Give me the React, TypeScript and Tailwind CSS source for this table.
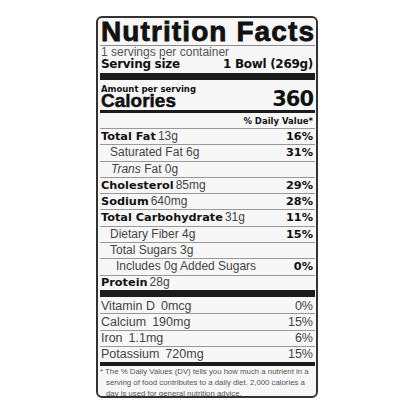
import React from 'react';

const B = "font-['DejaVu_Sans',sans-serif] font-bold text-[#111] leading-none";
const R = "font-['Liberation_Sans',Arial,sans-serif] text-[#444] leading-none";

function Row({ cls, children, pct }: { cls: string; children: React.ReactNode; pct?: React.ReactNode }) {
  return (
    <div className={`flex items-baseline pl-[1px] pr-[2px] ${cls}`}>
      {children}
      {pct}
    </div>
  );
}

const pctB = (v: string) => <span className={`ml-auto ${B} text-[11.3px]`}>{v}</span>;
const pctR = (v: string) => <span className={`ml-auto ${R} text-[12.5px]`}>{v}</span>;

export default function App() {
  return (
    <div className="w-[416px] h-[416px] bg-white pt-[16px] pl-[96px]">
      <div className="w-[222px] h-[382px] border-2 border-[#333] rounded-[6px] bg-[#f7f7f7] pl-[2px] pr-[1px] flex flex-col overflow-hidden">
        {/* header */}
        <div className="h-[27px] shrink-0 pl-[1px] font-['Liberation_Sans',Arial,sans-serif] font-bold text-[28px] leading-none tracking-[1.1px] text-[#111] [-webkit-text-stroke:0.8px_#111] whitespace-nowrap">
          Nutrition Facts
        </div>
        <div className="h-px shrink-0 bg-[#8a8a8a]" />
        <div className={`h-[12px] shrink-0 pl-[1px] ${R} text-[12px] text-[#555]`}>1 servings per container</div>
        <div className="h-[15px] shrink-0 flex justify-between pl-[1px] pr-[2px]">
          <span className={`${B} text-[12px] tracking-[-0.3px]`}>Serving size</span>
          <span className={`${B} text-[12px] tracking-[-0.3px]`}>1 Bowl (269g)</span>
        </div>
        <div className="h-[7px] shrink-0 bg-[#1c1c1c]" />
        <div className={`h-[13px] shrink-0 pt-[4.5px] pl-[1px] ${B} text-[8.5px]`}>Amount per serving</div>
        <div className="h-[17px] shrink-0 flex items-end justify-between pl-[1px] pr-[2px]">
          <span className="mb-[2px] font-['Liberation_Sans',Arial,sans-serif] font-bold text-[19px] leading-[15px] text-[#111] [-webkit-text-stroke:0.5px_#111]">Calories</span>
          <span className={`${B} text-[21px] tracking-[-1px]`}>360</span>
        </div>
        <div className="h-[3px] shrink-0 bg-[#1c1c1c]" />
        <div className={`h-[16px] shrink-0 pt-[4px] pr-[2px] text-right border-b border-[#999] ${B} text-[8.5px]`}>% Daily Value*</div>

        {/* nutrients */}
        <Row cls="h-[16px] shrink-0 pt-[1px] border-b border-[#999]" pct={pctB('16%')}>
          <span className={`${B} text-[11.3px]`}>Total Fat</span>
          <span className={`${R} text-[12px] ml-[2px]`}>13g</span>
        </Row>
        <Row cls="h-[17px] shrink-0 pt-[1px] border-b border-[#999]" pct={pctB('31%')}>
          <span className={`${R} text-[12px] ml-[9px]`}>Saturated Fat 6g</span>
        </Row>
        <Row cls="h-[16px] shrink-0 pt-[1px] border-b border-[#999]">
          <span className={`${R} text-[12px] ml-[10px]`}>
            <i>Trans</i> Fat 0g
          </span>
        </Row>
        <Row cls="h-[16px] shrink-0 pt-[1px] border-b border-[#999]" pct={pctB('29%')}>
          <span className={`${B} text-[11.3px]`}>Cholesterol</span>
          <span className={`${R} text-[12px] ml-[2px]`}>85mg</span>
        </Row>
        <Row cls="h-[16px] shrink-0 pt-[1px] border-b border-[#999]" pct={pctB('28%')}>
          <span className={`${B} text-[11.3px]`}>Sodium</span>
          <span className={`${R} text-[12px] ml-[2px]`}>640mg</span>
        </Row>
        <Row cls="h-[17px] shrink-0 pt-[1px] border-b border-[#999]" pct={pctB('11%')}>
          <span className={`${B} text-[11.3px]`}>Total Carbohydrate</span>
          <span className={`${R} text-[12px] ml-[2px]`}>31g</span>
        </Row>
        <Row cls="h-[16px] shrink-0 pt-[1px] border-b border-[#999]" pct={pctB('15%')}>
          <span className={`${R} text-[12px] ml-[9px]`}>Dietary Fiber 4g</span>
        </Row>
        <Row cls="h-[16px] shrink-0 pt-[1px] border-b border-[#999]">
          <span className={`${R} text-[12px] ml-[9px]`}>Total Sugars 3g</span>
        </Row>
        <Row cls="h-[17px] shrink-0 pt-[1px] border-b border-[#999]" pct={pctB('0%')}>
          <span className={`${R} text-[12px] ml-[15px]`}>Includes 0g Added Sugars</span>
        </Row>
        <Row cls="h-[14px] shrink-0">
          <span className={`${B} text-[11.3px]`}>Protein</span>
          <span className={`${R} text-[12px] ml-[2px]`}>28g</span>
        </Row>
        <div className="h-[7px] shrink-0 bg-[#1c1c1c]" />

        {/* vitamins & minerals */}
        <Row cls="h-[17px] shrink-0 pt-[3px] border-b border-[#999]" pct={pctR('0%')}>
          <span className={`${R} text-[12.5px]`}>Vitamin D</span>
          <span className={`${R} text-[12.5px] ml-[6px]`}>0mcg</span>
        </Row>
        <Row cls="h-[17px] shrink-0 pt-[2px] border-b border-[#999]" pct={pctR('15%')}>
          <span className={`${R} text-[12.5px]`}>Calcium</span>
          <span className={`${R} text-[12.5px] ml-[6px]`}>190mg</span>
        </Row>
        <Row cls="h-[16px] shrink-0 pt-[1px] border-b border-[#999]" pct={pctR('6%')}>
          <span className={`${R} text-[12.5px]`}>Iron</span>
          <span className={`${R} text-[12.5px] ml-[6px]`}>1.1mg</span>
        </Row>
        <Row cls="h-[15px] shrink-0 pt-[1px]" pct={pctR('15%')}>
          <span className={`${R} text-[12.5px]`}>Potassium</span>
          <span className={`${R} text-[12.5px] ml-[6px]`}>720mg</span>
        </Row>
        <div className="h-[4px] shrink-0 bg-[#1c1c1c]" />

        {/* footnote */}
        <div className="pl-[6px] font-['Liberation_Sans',Arial,sans-serif] text-[7.8px] leading-[11px] text-[#555] whitespace-nowrap">
          <div className="-ml-[6px]">* The % Daily Values (DV) tells you how much a nutrient in a</div>
          <div>serving of food contributes to a daily diet. 2,000 calories a</div>
          <div>day is used for general nutrition advice.</div>
        </div>
      </div>
    </div>
  );
}
